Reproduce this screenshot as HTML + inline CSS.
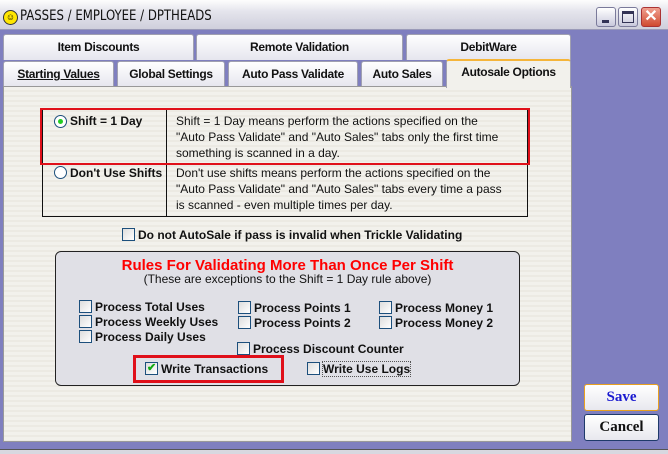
<!DOCTYPE html>
<html><head><style>
*{box-sizing:border-box;margin:0;padding:0}
body{width:668px;height:454px;background:#7f7fbf;position:relative;overflow:hidden;font-family:"Liberation Sans",sans-serif;}
.abs{position:absolute}
.title{left:0;top:0;width:668px;height:30px;background:linear-gradient(#fdfdfd,#e4e4ec 40%,#cfcfdc);border-bottom:1px solid #9a9ab8}
.ttext{left:20px;top:8px;font-size:14px;transform:scaleX(0.93);transform-origin:left;color:#111;font-family:"DejaVu Sans Condensed","Liberation Sans",sans-serif;white-space:nowrap}
.wb{top:7px;width:20px;height:20px;border:1px solid #7a7a9a;border-radius:3px;background:linear-gradient(#fff,#c8c8dc)}
.tab{height:26px;border:1px solid #a0a0b0;border-bottom:none;background:linear-gradient(#fff,#e6e6ee);font-size:12px;font-weight:bold;text-align:center;line-height:24px;color:#111;border-radius:3px 3px 0 0;white-space:nowrap;letter-spacing:-0.3px;overflow:hidden}
.panel{left:3px;top:86px;width:569px;height:356px;background:repeating-linear-gradient(#f2f1ec 0 3px,#eceae3 3px 5px);border:1px solid #999}
.cb{display:inline-block;width:13px;height:13px;border:1px solid #1c4f7c;background:linear-gradient(135deg,#ddd,#fff);vertical-align:-2px;margin-right:3px;position:relative}
.lbl{font-size:12px;font-weight:bold;color:#111;white-space:nowrap}
.desc{font-size:12px;line-height:16px;color:#111}
.btn{width:75px;height:27px;border:1px solid #1f3a6a;border-radius:3px;background:linear-gradient(#fff,#e8e8ee);font-family:"Liberation Serif",serif;font-weight:bold;font-size:15px;text-align:center;line-height:25px}
</style></head><body>
<div class="abs title"></div>
<div class="abs" style="left:3px;top:10px;width:15px;height:15px;border-radius:50%;background:#ffe600;border:1px solid #333;font-size:9px;line-height:13px;text-align:center">☺</div>
<div class="abs ttext">PASSES / EMPLOYEE / DPTHEADS</div>
<div class="abs wb" style="left:596px"><div class="abs" style="left:5px;top:12px;width:7px;height:3px;background:#335"></div></div>
<div class="abs wb" style="left:618px"><div class="abs" style="left:3px;top:3px;width:12px;height:12px;border:1px solid #335;border-top-width:3px"></div></div>
<div class="abs wb" style="left:641px;background:linear-gradient(#f0a090,#d04a30);border-color:#a33;color:#fff;font-size:16px;font-weight:bold;text-align:center;line-height:18px">✕</div>

<div class="abs tab" style="left:3px;top:34px;width:191px">Item Discounts</div>
<div class="abs tab" style="left:196px;top:34px;width:207px">Remote Validation</div>
<div class="abs tab" style="left:406px;top:34px;width:165px">DebitWare</div>

<div class="abs tab" style="left:3px;top:61px;width:111px"><span style="text-decoration:underline">Starting Values</span></div>
<div class="abs tab" style="left:117px;top:61px;width:108px">Global Settings</div>
<div class="abs tab" style="left:228px;top:61px;width:130px">Auto Pass Validate</div>
<div class="abs tab" style="left:361px;top:61px;width:82px">Auto Sales</div>
<div class="abs panel"></div>
<div class="abs tab" style="left:446px;top:59px;width:125px;height:29px;background:#f2f1ec;border-top:2px solid #f5b53a;line-height:22px;z-index:2">Autosale Options</div>

<div class="abs" style="left:42px;top:108px;width:486px;height:109px;border:1px solid #111"></div>
<div class="abs" style="left:166px;top:108px;width:1px;height:109px;background:#111"></div>
<div class="abs" style="left:42px;top:163px;width:486px;height:1px;background:#111"></div>
<div class="abs" style="left:40px;top:108px;width:490px;height:57px;border:2px solid #e0101a"></div>
<div class="abs" style="left:54px;top:115px;width:13px;height:13px;border-radius:50%;border:1px solid #1c4f7c;background:#fff"><div class="abs" style="left:3px;top:3px;width:5px;height:5px;border-radius:50%;background:#2c2"></div></div>
<div class="abs lbl" style="left:70px;top:114px">Shift = 1 Day</div>
<div class="abs desc" style="left:176px;top:113px">Shift = 1 Day means perform the actions specified on the<br>"Auto Pass Validate" and "Auto Sales" tabs only the first time<br>something is scanned in a day.</div>
<div class="abs" style="left:54px;top:166px;width:13px;height:13px;border-radius:50%;border:1px solid #1c4f7c;background:#fff"></div>
<div class="abs lbl" style="left:70px;top:166px">Don't Use Shifts</div>
<div class="abs desc" style="left:176px;top:165px">Don't use shifts means perform the actions specified on the<br>"Auto Pass Validate" and "Auto Sales" tabs every time a pass<br>is scanned - even multiple times per day.</div>

<div class="abs lbl" style="left:122px;top:228px"><span class="cb"></span>Do not AutoSale if pass is invalid when Trickle Validating</div>

<div class="abs" style="left:55px;top:251px;width:465px;height:135px;border:1px solid #222;border-radius:6px;background:#e0e0e6"></div>
<div class="abs" style="left:55px;top:257px;width:465px;text-align:center;color:#f00;font-size:15px;font-weight:bold">Rules For Validating More Than Once Per Shift</div>
<div class="abs" style="left:55px;top:272px;width:465px;text-align:center;font-size:12px;color:#111">(These are exceptions to the Shift = 1 Day rule above)</div>
<div class="abs lbl" style="left:79px;top:300px"><span class="cb"></span>Process Total Uses</div>
<div class="abs lbl" style="left:79px;top:315px"><span class="cb"></span>Process Weekly Uses</div>
<div class="abs lbl" style="left:79px;top:330px"><span class="cb"></span>Process Daily Uses</div>
<div class="abs lbl" style="left:238px;top:301px"><span class="cb"></span>Process Points 1</div>
<div class="abs lbl" style="left:238px;top:316px"><span class="cb"></span>Process Points 2</div>
<div class="abs lbl" style="left:379px;top:301px"><span class="cb"></span>Process Money 1</div>
<div class="abs lbl" style="left:379px;top:316px"><span class="cb"></span>Process Money 2</div>
<div class="abs lbl" style="left:237px;top:342px"><span class="cb"></span>Process Discount Counter</div>
<div class="abs" style="left:133px;top:355px;width:151px;height:28px;border:3px solid #e0101a"></div>
<div class="abs lbl" style="left:145px;top:362px"><span class="cb"><span class="abs" style="left:1px;top:-1px;color:#1a1;font-size:11px;line-height:12px">✔</span></span>Write Transactions</div>
<div class="abs lbl" style="left:307px;top:362px"><span class="cb"></span><span style="outline:1px dotted #555">Write Use Logs</span></div>

<div class="abs btn" style="left:584px;top:384px;color:#1a1ad0;border-color:#e8a020">Save</div>
<div class="abs btn" style="left:584px;top:414px;color:#111">Cancel</div>
<div class="abs" style="left:0;top:449px;width:668px;height:5px;background:#d8d8e0;border-top:1px solid #555"></div>
</body></html>
